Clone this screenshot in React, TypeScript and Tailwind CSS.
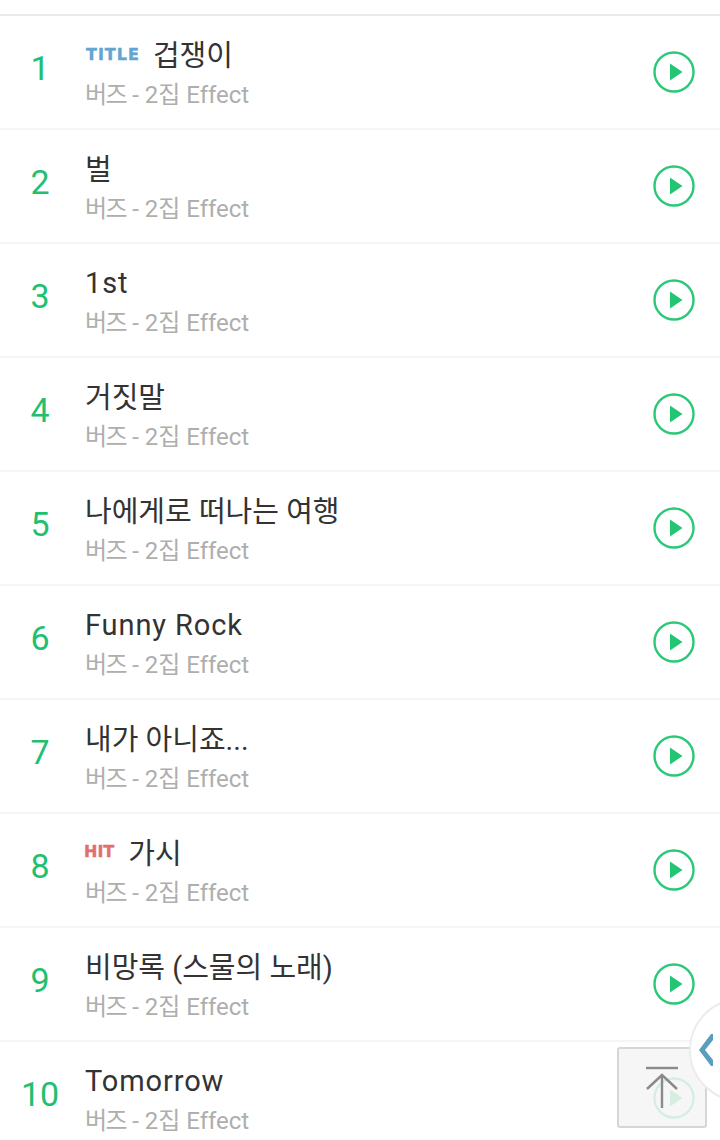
const TRACKS = [
  { title: '겁쟁이', badge: 'title' },
  { title: '벌' },
  { title: '1st', latin: true },
  { title: '거짓말' },
  { title: '나에게로 떠나는 여행' },
  { title: 'Funny Rock', latin: true },
  { title: '내가 아니죠...' },
  { title: '가시', badge: 'hit' },
  { title: '비망록 (스물의 노래)' },
  { title: 'Tomorrow', latin: true },
];

function PlayIcon() {
  return (
    <svg width="44" height="44" viewBox="0 0 44 44" fill="none">
      <circle cx="22" cy="22" r="19.5" stroke="#2bc878" strokeWidth="2.4" />
      <path d="M18 13.5 L30.5 22 L18 30.5 Z" fill="#22c672" />
    </svg>
  );
}

function Row({ n, title, badge, latin }: { n: number; title: string; badge?: string; latin?: boolean }) {
  return (
    <div className="h-[114px] flex items-center border-b-2 border-[#f5f5f6] bg-white">
      <div className="w-[80px] shrink-0 text-center text-[34px] leading-none text-[#22bf70] pb-[9px]">{n}</div>
      <div className="flex-1 min-w-0 pl-[5px]">
        <div className="flex items-center h-[40px] mt-[1px] text-[29px] leading-[40px] text-[#333333]">
          {badge === 'title' && (
            <span className="[font-family:'DejaVu_Sans',sans-serif] font-bold text-[16px] leading-none text-[#62a5cf] tracking-[1px] [-webkit-text-stroke:0.4px_#62a5cf] ml-[1px] mr-[13px]">
              TITLE
            </span>
          )}
          {badge === 'hit' && (
            <span className="[font-family:'DejaVu_Sans',sans-serif] font-bold text-[16px] leading-none text-[#e07070] [-webkit-text-stroke:0.4px_#e07070] ml-[-1px] mr-[14px] mb-[2px]">
              HIT
            </span>
          )}
          <span className={latin ? 'tracking-[0.9px]' : 'translate-y-[1px]'}>{title}</span>
        </div>
        <div className="text-[24px] leading-[32px] mt-[4px] text-[#aeaeae]">
          <span className="tracking-[-1.5px]">버즈</span> - 2집 Effect
        </div>
      </div>
      <div className="w-[44px] shrink-0 mr-[24px] flex items-center justify-center">
        <PlayIcon />
      </div>
    </div>
  );
}

export default function App() {
  return (
    <div className="relative w-[720px] h-[1140px] overflow-hidden bg-white font-['Roboto','Noto_Sans_CJK_KR',sans-serif]">
      <div className="h-[16px] border-b-2 border-[#e9e9ee]" />
      {TRACKS.map((t, i) => (
        <Row key={i} n={i + 1} title={t.title} badge={t.badge} latin={t.latin} />
      ))}

      {/* scroll to top */}
      <div className="absolute left-[617px] top-[1047px] w-[90px] h-[81px] rounded-[3px] border-2 border-[#d6d6d6] bg-[#f5f5f5]/85 flex items-center justify-center">
        <svg width="36" height="44" viewBox="0 0 36 44" fill="none" stroke="#8a8a8a" strokeWidth="2.4">
          <path d="M2 2 H34" />
          <path d="M18 10 V42" />
          <path d="M3 23 L18 9 L33 23" />
        </svg>
      </div>

      {/* side drawer handle */}
      <div className="absolute left-[689px] top-[998px] w-[104px] h-[104px] rounded-full bg-white border-2 border-[#ececec] flex items-center pl-[8px]">
        <svg width="14" height="32" viewBox="0 0 14 32">
          <path d="M12 0 L14 0 L14 6 L6 16 L14 26 L14 32 L12 32 L0 16 Z" fill="#5b9dbd" />
        </svg>
      </div>
    </div>
  );
}
